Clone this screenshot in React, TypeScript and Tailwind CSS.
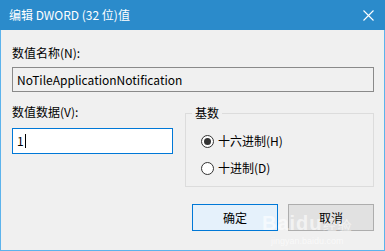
import React from 'react';

const cjk = { fontFamily: '"Noto Sans CJK SC", "Noto Sans", sans-serif' };

function Radio({ checked, label }: { checked?: boolean; label: string }) {
  return (
    <div className="flex items-center gap-[4px] h-[16px]">
      <span className="w-[13px] h-[13px] rounded-full border border-[#333333] bg-white flex items-center justify-center">
        {checked && <span className="w-[7px] h-[7px] rounded-full bg-[#333333]" />}
      </span>
      <span className="text-[12px] leading-[16px] text-black">{label}</span>
    </div>
  );
}

export default function App() {
  return (
    <div className="relative w-[385px] h-[251px] flex flex-col bg-[#f0f0f0] select-none" style={cjk}>
      <div className="h-[30px] bg-[#2b8bcb] flex items-center justify-between pl-[9px] pr-[11px] shrink-0">
        <span className="text-white text-[12px] leading-[16px]">编辑 DWORD (32 位)值</span>
        <svg width="11" height="11" viewBox="0 0 11 11">
          <path d="M0.5 0.5 L10.5 10.5 M10.5 0.5 L0.5 10.5" stroke="white" strokeWidth="1.1" />
        </svg>
      </div>

      <div className="flex-1 flex flex-col border-x border-b border-[#5cb3ec] pl-[11px] pr-[10px]">
        <div className="mt-[15px] text-[12px] leading-[16px] text-black">数值名称(N):</div>
        <div className="mt-[6px] h-[25px] border border-[#8a8a8a] bg-[#f0f0f0] flex items-center pl-[4px] text-[12px] text-black">
          NoTileApplicationNotification
        </div>

        <div className="mt-[12px] flex items-start gap-[12px]">
          <div className="w-[161px] flex flex-col">
            <div className="text-[12px] leading-[16px] text-black">数值数据(V):</div>
            <div className="mt-[8px] h-[26px] border border-[#0078d7] bg-white flex items-center pl-[4px] text-[12px] text-black">
              1<span className="w-px h-[14px] bg-black ml-[1px]" />
            </div>
          </div>

          <div className="relative mt-[9px] w-[189px] h-[74px] border border-[#dcdcdc] flex flex-col pl-[15px] pt-[19px] gap-[11px]">
            <span className="absolute -top-[9px] left-[6px] px-[3px] bg-[#f0f0f0] text-[12px] leading-[16px] text-black">基数</span>
            <Radio checked label="十六进制(H)" />
            <Radio label="十进制(D)" />
          </div>
        </div>

        <div className="mt-[17px] flex justify-end gap-[10px]">
          <button className="w-[86px] h-[27px] border border-[#0078d7] bg-[#e5f1fb] text-[12px] text-black">确定</button>
          <button className="w-[86px] h-[27px] border border-[#adadad] bg-[#e1e1e1] text-[12px] text-black">取消</button>
        </div>
      </div>

      <div className="absolute left-[262px] top-[212px] flex flex-col items-center text-white/60 pointer-events-none">
        <span className="text-[20px] leading-[22px] font-bold tracking-[1px]" style={{ fontFamily: '"Liberation Sans", sans-serif' }}>Baidu<span className="text-[14px] font-normal">经验</span></span>
        <span className="text-[9px] leading-[10px]" style={{ fontFamily: '"Liberation Sans", sans-serif' }}>jingyan.baidu.com</span>
      </div>
    </div>
  );
}
